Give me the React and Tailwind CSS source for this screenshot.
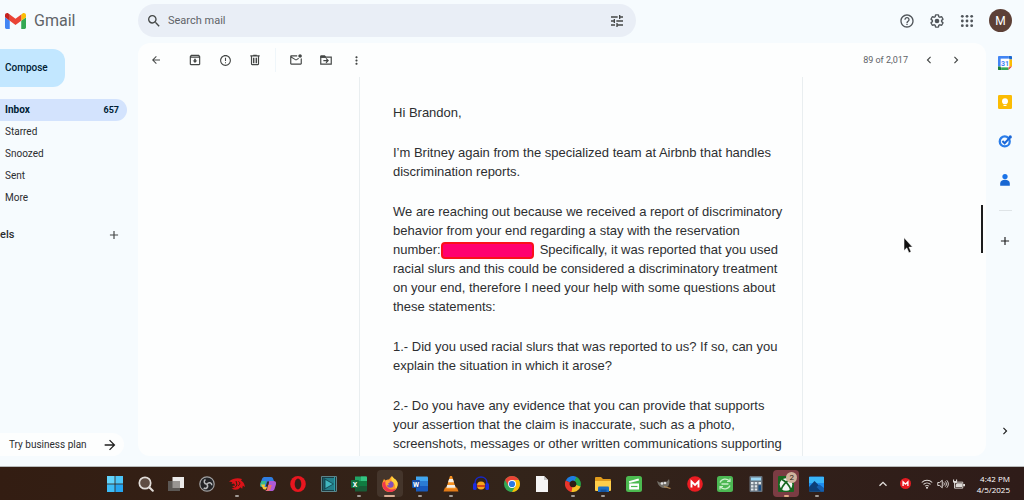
import React from "react";
import {
  MdAdd,
  MdArrowBack,
  MdArrowForward,
  MdChevronLeft,
  MdChevronRight,
  MdErrorOutline,
  MdHelpOutline,
  MdMoreVert,
  MdOutlineArchive,
  MdOutlineMarkEmailUnread,
  MdSearch,
  MdTune,
} from "react-icons/md";

function Svg({ children, className = "size-4", viewBox = "0 0 16 16" }) {
  return (
    <svg viewBox={viewBox} className={className} aria-hidden="true">
      {children}
    </svg>
  );
}

function GmailLogo() {
  return (
    <Svg viewBox="0 0 88 66" className="h-4 w-[21px]">
      <path fill="#4285f4" d="M6 66h14V32L0 17v43c0 3.320 2.690 6 6 6" />
      <path fill="#34a853" d="M68 66h14c3.320 0 6-2.690 6-6V17L68 32" />
      <path fill="#fbbc04" d="M68 6v26l20-15V9c0-7.420-8.470-11.650-14.400-7.200" />
      <path fill="#ea4335" d="M20 32V6l24 18L68 6v26L44 50" />
      <path fill="#c5221f" d="M0 9v8l20 15V6l-5.600-4.200C8.470-2.650 0 1.580 0 9" />
    </Svg>
  );
}

function TrashIcon({ className }) {
  return (
    <Svg viewBox="0 0 24 24" className={className}>
      <path
        fill="currentColor"
        d="M15 4V3H9v1H4v2h1v13c0 1.100.9 2 2 2h10c1.100 0 2-.9 2-2V6h1V4h-5zm2 15H7V6h10v13zM8.500 8H11v9.500H8.500zm4.500 0h2.500v9.500H13z"
      />
    </Svg>
  );
}

function MoveIcon({ className }) {
  return (
    <Svg viewBox="0 0 24 24" className={className}>
      <path fill="none" stroke="currentColor" strokeWidth="2" d="M3 7v12h18V7z" />
      <path fill="currentColor" d="M2 6c0-1.100.9-2 2-2h6l2 2.500V8H2z" />
      <path fill="none" stroke="currentColor" strokeWidth="2" d="M7.500 13h8M12 9.300l3.700 3.700-3.700 3.700" />
    </Svg>
  );
}

function GearIcon({ className }) {
  return (
    <Svg viewBox="0 0 24 24" className={className}>
      <path
        fill="currentColor"
        d="M13.850 22.250h-3.700c-.74 0-1.360-.54-1.450-1.270l-.27-1.890c-.27-.14-.53-.29-.79-.46l-1.800.72c-.7.26-1.470-.03-1.810-.65L2.200 15.530c-.35-.66-.2-1.440.36-1.880l1.530-1.190c-.01-.15-.02-.3-.02-.46 0-.15.01-.31.02-.46l-1.520-1.190c-.59-.45-.74-1.260-.37-1.880l1.850-3.190c.34-.62 1.110-.9 1.790-.63l1.810.73c.26-.17.52-.32.78-.46l.27-1.910c.09-.7.71-1.250 1.440-1.250h3.700c.74 0 1.360.54 1.450 1.270l.27 1.890c.27.14.53.29.79.46l1.800-.72c.71-.26 1.480.03 1.820.65l1.840 3.180c.36.66.2 1.440-.36 1.880l-1.520 1.190c.01.15.02.3.02.46s-.01.31-.02.46l1.520 1.190c.56.45.72 1.230.37 1.860l-1.860 3.220c-.34.62-1.110.9-1.800.63l-1.800-.72c-.26.17-.52.32-.78.46l-.27 1.910c-.1.68-.72 1.220-1.460 1.220zm-3.230-2h2.760l.37-2.550.53-.22c.44-.18.88-.44 1.340-.78l.45-.34 2.380.96 1.380-2.400-2.030-1.580.07-.56c.03-.26.06-.51.06-.78s-.03-.53-.06-.78l-.07-.56 2.030-1.580-1.390-2.400-2.390.96-.45-.35c-.42-.32-.87-.58-1.330-.77l-.52-.22-.37-2.550h-2.760l-.37 2.550-.53.21c-.44.19-.88.44-1.340.79l-.45.33-2.380-.95-1.390 2.390 2.030 1.580-.07.56a7 7 0 0 0-.06.79c0 .26.02.53.06.78l.07.56-2.030 1.580 1.380 2.400 2.390-.96.45.35c.43.33.86.58 1.330.77l.53.22.38 2.550z"
      />
      <circle cx="12" cy="12" r="3.500" fill="currentColor" />
    </Svg>
  );
}

function AppsIcon({ className }) {
  return (
    <Svg viewBox="0 0 24 24" className={className}>
      {[5, 12, 19].map((y) =>
        [5, 12, 19].map((x) => <circle key={`${x}-${y}`} cx={x} cy={y} r="2.100" fill="currentColor" />)
      )}
    </Svg>
  );
}

const sidePanel = [
  {
    label: "Calendar",
    icon: (
      <Svg className="size-[14px]">
        <path fill="#4285f4" d="M1 0h11v4H4v8H0V1a1 1 0 0 1 1-1z" />
        <path fill="#1967d2" d="M12 0h3a1 1 0 0 1 1 1v3h-4z" />
        <path fill="#fbbc04" d="M12 4h4v8h-4z" />
        <path fill="#34a853" d="M4 12h8v4H4z" />
        <path fill="#188038" d="M0 12h4v4H1a1 1 0 0 1-1-1z" />
        <path fill="#ea4335" d="M12 12h4l-4 4z" />
        <path fill="#fff" d="M3 3h10v10H3z" />
        <text x="8" y="11" textAnchor="middle" fontSize="8" fontWeight="700" fill="#4285f4">31</text>
      </Svg>
    ),
  },
  {
    label: "Keep",
    icon: (
      <Svg className="size-[14px]">
        <rect width="16" height="16" rx="1.500" fill="#fbbc04" />
        <circle cx="8" cy="7" r="3.400" fill="#fff" />
        <path fill="#fff" d="M6.300 9h3.400v1.700H6.300zM6.300 11.500h3.400v1.200H6.300z" />
      </Svg>
    ),
  },
  {
    label: "Tasks",
    icon: (
      <Svg className="size-[14px]">
        <circle cx="7.700" cy="8.500" r="5.700" fill="none" stroke="#2a7de9" strokeWidth="2.600" />
        <path fill="none" stroke="#1a66d6" strokeWidth="2.300" d="M5 8l2.600 2.600L14.600 3" />
        <circle cx="14" cy="3.300" r="1.800" fill="#1a66d6" />
      </Svg>
    ),
  },
  {
    label: "Contacts",
    icon: (
      <Svg className="size-[14px]">
        <circle cx="8" cy="4" r="3" fill="#1a73e8" />
        <path fill="#1967d2" d="M2.500 14.500V12c0-2.700 2.300-4.200 5.500-4.200s5.500 1.500 5.500 4.200v2.500z" />
      </Svg>
    ),
  },
];

const taskbar = [
  {
    label: "Start",
    icon: (
      <Svg>
        <path fill="#62d4fb" d="M0 0h7.600v7.600H0z" />
        <path fill="#4cc6f8" d="M8.400 0H16v7.600H8.400z" />
        <path fill="#3dbcf6" d="M0 8.400h7.600V16H0z" />
        <path fill="#25a5f0" d="M8.400 8.400H16V16H8.400z" />
      </Svg>
    ),
  },
  {
    label: "Search",
    icon: (
      <Svg>
        <circle cx="7" cy="7" r="5.700" fill="#5f4d43" stroke="#e2ddd9" strokeWidth="1.700" />
        <path stroke="#e2ddd9" strokeWidth="2" strokeLinecap="round" d="M11.500 11.500l3.300 3.300" />
      </Svg>
    ),
  },
  {
    label: "Task view",
    icon: (
      <Svg>
        <path fill="#eceae9" d="M4.500 1H16v11H4.500z" />
        <path fill="#5c5855" d="M0 5h12v10H0z" />
        <path fill="#999592" d="M4.500 5H12v7H4.500z" />
      </Svg>
    ),
  },
  {
    label: "OBS Studio",
    icon: (
      <Svg>
        <circle cx="8" cy="8" r="7.200" fill="#232427" stroke="#a2a2a3" strokeWidth="1.200" />
        <g fill="none" stroke="#b9babc" strokeWidth="1.500">
          <path d="M8 8.300C4.500 8 4.700 4.500 6.500 3.500" />
          <path d="M8 8.300c1.700-3 4.900-1.300 4.800.9" />
          <path d="M8 8.300c1.800 3-1 5.200-3.300 3.700" />
        </g>
      </Svg>
    ),
  },
  {
    label: "Redragon",
    running: true,
    icon: (
      <Svg>
        <path
          fill="#dc1218"
          d="M0 5.500C4 2 9 1.500 13 3l-1 1.600c2.500 1.300 3.300 3.500 4 6.400l-2.200-1.300-.6 3-1.900-1.500C9.500 14 6 14.500 2.500 12.500l3-.7L3 10l3.200-.5L5 7.500 2.500 8l.9-1.800z"
        />
        <path fill="none" stroke="#33200f" d="M7 5l1 4-2 2.500M9.500 5.500c2 1 1.500 3-.5 4.500" />
      </Svg>
    ),
  },
  {
    label: "Copilot",
    icon: (
      <Svg>
        <path fill="#2f7de1" d="M5 1h6c1.500 0 2 1 2.400 2.500L14 5H9L7 11H2C0 11 0 9 .6 7L2 3c.5-1.500 1.500-2 3-2z" />
        <path fill="#35b98d" d="M1.500 5h4.700l-2 6H2C0 11 0 9 .6 7z" />
        <path fill="#f3c43c" d="M1 8.500h4.200L4.500 11H7l-1 2.500H4.500C3 13.500 2.600 12 2 10.500z" />
        <path fill="#b05ad6" d="M9 5h5c2 0 2.400 2 1.800 4l-1.300 4c-.5 1.500-1.500 2-3 2H5c1.500 0 2-1 2.400-2.500z" />
        <path fill="#f0706d" d="M7.800 9h4l-1.300 4c-.5 1.500-1.500 2-3 2H5c1.500 0 2-1 2.400-2.500z" />
        <path fill="#3c281b" d="M7.200 5.500h2l-1.500 5h-2z" />
      </Svg>
    ),
  },
  {
    label: "Opera",
    icon: (
      <Svg>
        <ellipse cx="8" cy="8" rx="7.800" ry="8" fill="#e8161f" />
        <ellipse cx="8" cy="8" rx="3.300" ry="5.400" fill="#33201a" />
      </Svg>
    ),
  },
  {
    label: "Filmora",
    icon: (
      <Svg>
        <path fill="#1a3c43" stroke="#5d858a" d="M.5.5h15v15H.5z" />
        <path fill="#24808b" d="M2.500 2h11v12h-11z" />
        <path fill="#164e58" d="M3 2l10 6-10 6z" />
        <path fill="#42b8c0" d="M4.500 4l7 4-7 4z" />
        <path stroke="#2ca0a9" d="M13.500 1v14" />
      </Svg>
    ),
  },
  {
    label: "Excel",
    running: true,
    icon: (
      <Svg>
        <path fill="#21a366" d="M4 .5h11a1 1 0 0 1 1 1V5H4z" />
        <path fill="#107c41" d="M4 5h12v5H4z" />
        <path fill="#185c37" d="M4 10h12v4.500a1 1 0 0 1-1 1H4z" />
        <path fill="#33c481" d="M10 .5h5a1 1 0 0 1 1 1V5h-6z" />
        <rect y="4" width="8" height="8" rx="1" fill="#12713c" />
        <text x="4" y="10.500" textAnchor="middle" fontSize="7" fontWeight="700" fill="#fff">X</text>
      </Svg>
    ),
  },
  {
    label: "Firefox",
    active: true,
    icon: (
      <Svg>
        <path fill="#ff9a2a" d="M2 3l1.500 1.500C5 3.500 6 3.600 7 3.600 8 2 9 1 10 0c.5 2 4 3 5.300 6 1.600 5-2.300 10-7.300 10S-.6 12 .4 7C.8 5 1.500 4 2 3z" />
        <path fill="#ffd43c" d="M10 0c.5 2 4 3 5.300 6 .8 3-.3 6-2.300 8 1-4-.5-7-3-8.500C9 3.500 9 2 10 0z" />
        <path fill="#f0364f" d="M.4 7C0 12 3 16 8 16c3 0 5.500-1.500 6.500-4-3 2-6 2-8.500 0C3.500 10.500 3 8 3.500 5z" />
        <circle cx="8.300" cy="8.500" r="3.300" fill="#8250bb" />
        <path fill="#ffa436" d="M3.500 5C5.500 4 7 4.500 8.500 6L6 7.500l1 1.500C5 10 3.500 8 3.500 5z" />
      </Svg>
    ),
  },
  {
    label: "Word",
    running: true,
    icon: (
      <Svg>
        <path fill="#41a5ee" d="M4 .5h11a1 1 0 0 1 1 1V5H4z" />
        <path fill="#2b7cd3" d="M4 5h12v5H4z" />
        <path fill="#185abd" d="M4 10h12v4.500a1 1 0 0 1-1 1H4z" />
        <rect y="4" width="8" height="8" rx="1" fill="#174ea8" />
        <text x="4" y="10.500" textAnchor="middle" fontSize="7" fontWeight="700" fill="#fff">W</text>
      </Svg>
    ),
  },
  {
    label: "VLC",
    running: true,
    icon: (
      <Svg>
        <path fill="#e37b17" d="M2 11.500h12l1.500 4H.5z" />
        <path fill="#f59021" d="M7 0h2l4 13H3z" />
        <path fill="#f3eee8" d="M6.100 3h3.800l1 3.200H5.100zM4.200 9h7.600l.9 2.800H3.300z" />
      </Svg>
    ),
  },
  {
    label: "Audacity",
    icon: (
      <Svg>
        <path fill="none" stroke="#1828c8" strokeWidth="1.600" d="M2 10V7c0-8 12-8 12 0v3" />
        <rect y="7" width="3.600" height="7" rx="1.500" fill="#1c2ce0" />
        <rect x="12.400" y="7" width="3.600" height="7" rx="1.500" fill="#1c2ce0" />
        <ellipse cx="8" cy="9.500" rx="4" ry="4" fill="#f6a51b" />
        <path fill="none" stroke="#d43b18" strokeWidth="1.800" d="M4 10h8" />
      </Svg>
    ),
  },
  {
    label: "Chrome",
    icon: (
      <Svg>
        <circle cx="8" cy="8" r="8" fill="#34a853" />
        <path fill="#ea4335" d="M1.100 4A8 8 0 0 1 14.900 4L8 4.500 4.500 10z" />
        <path fill="#fbbc04" d="M14.900 4A8 8 0 0 1 8 16l3.500-6L8 4z" />
        <circle cx="8" cy="8" r="4" fill="#fff" />
        <circle cx="8" cy="8" r="3.100" fill="#2878e5" />
      </Svg>
    ),
  },
  {
    label: "Document",
    icon: (
      <Svg>
        <path fill="#f5f5f5" d="M2 0h8l4 4v12H2z" />
        <path fill="#c4c4c4" d="M10 0l4 4h-4z" />
      </Svg>
    ),
  },
  {
    label: "Color wheel",
    running: true,
    icon: (
      <Svg>
        <g fill="none" strokeWidth="4.600">
          <path stroke="#1e7ce0" d="M2.800 5.500A5.700 5.700 0 0 1 11 3.200" />
          <path stroke="#26a648" d="M10.500 2.900A5.700 5.700 0 0 1 13 10.500" />
          <path stroke="#f5c125" d="M13.400 9.700A5.700 5.700 0 0 1 6 13.300" />
          <path stroke="#e8352b" d="M7 13.600A5.700 5.700 0 0 1 2.800 5.500" />
        </g>
        <circle cx="8" cy="8" r="3" fill="#2c1c14" />
      </Svg>
    ),
  },
  {
    label: "File Explorer",
    running: true,
    icon: (
      <Svg>
        <path fill="#e19c1c" d="M0 2a1 1 0 0 1 1-1h5l2 2h7a1 1 0 0 1 1 1v3H0z" />
        <path fill="#ffce4a" d="M0 5h16v9a1 1 0 0 1-1 1H1a1 1 0 0 1-1-1z" />
        <path fill="#1d6fc4" d="M3 11.500a1 1 0 0 1 1-1h9a1 1 0 0 1 1 1V16H3z" />
        <path fill="#1555a1" d="M5.500 13.500h6V16h-6z" />
      </Svg>
    ),
  },
  {
    label: "Video editor",
    icon: (
      <Svg>
        <rect width="16" height="16" rx="2.500" fill="#4cba50" />
        <path fill="#fff" d="M2.800 5.200l9.700-2.600.6 1.800-9.700 2.500zM3.200 7.500h9.800v6H3.200z" />
        <path stroke="#4cba50" strokeWidth="1.200" d="M5 10.500h6.500" />
      </Svg>
    ),
  },
  {
    label: "GIMP",
    icon: (
      <Svg>
        <path fill="#716d66" d="M1 5l3 1.500C6 5 9 6 11 5.500L13 3c1 3 .5 7-2.500 8.500C7 13 3.500 11 2 8z" />
        <circle cx="6" cy="7.500" r="1.300" fill="#ddd" />
        <circle cx="9" cy="7" r="1.300" fill="#ddd" />
        <path stroke="#b68b50" strokeWidth="1.200" d="M8 10.500l6.500 2" />
      </Svg>
    ),
  },
  {
    label: "MEGA",
    icon: (
      <Svg>
        <circle cx="8" cy="8" r="7.800" fill="#ea1c22" />
        <path fill="none" stroke="#fff" strokeWidth="1.900" d="M4.500 11.500V5.500L8 9l3.500-3.500v6" />
      </Svg>
    ),
  },
  {
    label: "Converter",
    icon: (
      <Svg>
        <rect width="16" height="16" rx="2.500" fill="#4cb853" />
        <path fill="none" stroke="#c9efca" strokeWidth="1.200" d="M3 6.500C4.500 2.500 10 2 12.500 5M13 2.500v3h-3M13 9.500c-1.500 4-7 4.500-9.500 1.500M3 13.500v-3h3" />
        <path stroke="#c9efca" strokeWidth="1.500" d="M4.500 8h7" />
      </Svg>
    ),
  },
  {
    label: "Calculator",
    icon: (
      <Svg>
        <rect x="1.500" width="13" height="16" rx="1" fill="#687480" />
        <path fill="#9bd6f3" d="M3 1.500h10v3H3z" />
        <path fill="#dfe5e9" d="M3 6h2.500v2.300H3zM6.700 6h2.500v2.300H6.700zM10.500 6H13v2.300h-2.500zM3 9.200h2.500v2.300H3zM6.700 9.200h2.500v2.300H6.700zM3 12.400h2.500v2.200H3zM6.700 12.400h2.500v2.200H6.700z" />
        <path fill="#174d86" d="M10.500 9.200H13v5.400h-2.500z" />
      </Svg>
    ),
  },
  {
    label: "Xbox",
    alert: true,
    badge: "2",
    icon: (
      <Svg>
        <rect width="16" height="16" rx="1" fill="#17661f" />
        <circle cx="8" cy="8.500" r="6.300" fill="#f4f6f4" />
        <path fill="none" stroke="#17661f" strokeWidth="1.700" d="M4 3.500C8 5.500 11 9 12.800 13.500M12 3.500C8 5.500 5 9 3.200 13.500" />
      </Svg>
    ),
  },
  {
    label: "Photos",
    running: true,
    icon: (
      <Svg>
        <rect y=".5" width="15" height="15" rx="1" fill="#1e8df0" />
        <path fill="#39b5f8" d="M0 1h15v6H0z" />
        <path fill="#0c3e78" d="M0 11l5.500-6L15 14.500a1 1 0 0 1-1 1H1a1 1 0 0 1-1-1z" />
        <path fill="#145eae" d="M7.500 11l3-2.500L15 12v3.500h-3z" />
      </Svg>
    ),
  },
];

function IconButton({ label, className = "", children }) {
  return (
    <button
      type="button"
      aria-label={label}
      className={`flex size-5 shrink-0 items-center justify-center rounded-full ${className}`}
    >
      {children}
    </button>
  );
}

function Header() {
  return (
    <header className="flex h-[43px] shrink-0 items-center pb-[2px] pr-3">
      <a href="#inbox" className="flex w-[138px] shrink-0 items-center gap-2 pl-[5px]">
        <GmailLogo />
        <span className="text-[16px] leading-5 text-[#5f6368]">Gmail</span>
      </a>
      <form className="flex h-[33px] max-w-[498px] flex-1 items-center gap-1 rounded-full bg-[#e9eef6] pl-[6px] pr-[9px] text-[#444746]">
        <IconButton label="Search">
          <MdSearch className="size-4" />
        </IconButton>
        <input
          type="text"
          aria-label="Search mail"
          placeholder="Search mail"
          className="min-w-0 flex-1 bg-transparent text-[11px] leading-4 outline-none placeholder:text-[#5f6368]"
        />
        <IconButton label="Show search options">
          <MdTune className="size-4" />
        </IconButton>
      </form>
      <div className="ml-auto flex items-center gap-3">
        <div className="flex items-center gap-[10px] text-[#50555a]">
          <IconButton label="Support">
            <MdHelpOutline className="size-4" />
          </IconButton>
          <IconButton label="Settings">
            <GearIcon className="size-4" />
          </IconButton>
          <IconButton label="Google apps">
            <AppsIcon className="size-4" />
          </IconButton>
        </div>
        <button
          type="button"
          className="flex size-[23px] items-center justify-center rounded-full bg-[#5d4037] text-[12px] leading-none text-white"
        >
          M
        </button>
      </div>
    </header>
  );
}

function Sidebar() {
  return (
    <aside className="flex w-[138px] shrink-0 flex-col items-start pt-[6px] text-[10px] leading-4 text-[#2b2d30]">
      <button
        type="button"
        className="h-[38px] w-[65px] rounded-r-xl bg-[#c2e7ff] pl-[5px] text-left font-medium text-[#001d35]"
      >
        Compose
      </button>
      <nav className="mt-3 w-[127px]">
        <a
          href="#inbox"
          className="flex h-[22px] items-center justify-between rounded-r-full bg-[#d3e3fd] pl-[5px] pr-2 font-bold text-[#001d35]"
        >
          <span>Inbox</span>
          <span className="text-[9px]">657</span>
        </a>
        {["Starred", "Snoozed", "Sent", "More"].map((item) => (
          <a key={item} href={`#${item.toLowerCase()}`} className="flex h-[22px] items-center pl-[5px]">
            {item}
          </a>
        ))}
      </nav>
      <div className="mt-4 flex w-[124px] items-center justify-between">
        <h2 className="text-[11px] font-medium">els</h2>
        <IconButton label="Create new label">
          <MdAdd className="size-[14px] text-[#444746]" />
        </IconButton>
      </div>
      <button
        type="button"
        className="mt-auto flex h-[23px] w-[124px] items-center justify-between rounded-r-full bg-[#fdfefe] pl-[9px] pr-[6px]"
      >
        Try business plan
        <MdArrowForward className="size-4 text-[#1f1f1f]" />
      </button>
    </aside>
  );
}

function Toolbar() {
  return (
    <div className="flex h-[34px] shrink-0 items-center pl-2 pr-5 text-[#444746]">
      <IconButton label="Back" className="mr-[19px]">
        <MdArrowBack className="size-3" />
      </IconButton>
      <div className="flex gap-[10px]">
        <IconButton label="Archive">
          <MdOutlineArchive className="size-[14px]" />
        </IconButton>
        <IconButton label="Report spam">
          <MdErrorOutline className="size-[13px]" />
        </IconButton>
        <IconButton label="Delete">
          <TrashIcon className="size-[14px]" />
        </IconButton>
      </div>
      <div className="mx-[10px] h-6 w-px bg-[#eff6fa]" />
      <div className="flex gap-[10px]">
        <IconButton label="Mark as unread">
          <MdOutlineMarkEmailUnread className="size-[14px]" />
        </IconButton>
        <IconButton label="Move to">
          <MoveIcon className="size-[14px]" />
        </IconButton>
        <IconButton label="More">
          <MdMoreVert className="size-[13px]" />
        </IconButton>
      </div>
      <span className="ml-auto mr-[11px] text-[9px] leading-4 text-[#5f6368]">89 of 2,017</span>
      <IconButton label="Newer" className="mr-[7px]">
        <MdChevronLeft className="size-[14px]" />
      </IconButton>
      <IconButton label="Older">
        <MdChevronRight className="size-[14px]" />
      </IconButton>
    </div>
  );
}

function Message() {
  return (
    <div className="min-h-0 flex-1 overflow-hidden pl-[38px]">
      <article className="mx-auto min-h-full max-w-[444px] space-y-[21px] border-x border-[#e9eef0] pl-[33px] pr-3 pt-[26px] font-['Liberation_Sans',Arial,sans-serif] text-[13px] leading-[19px] text-[#2d2f31]">
        <p>Hi Brandon,</p>
        <p>
          I’m Britney again from the specialized team at Airbnb that handles
          <br />
          discrimination reports.
        </p>
        <p>
          We are reaching out because we received a report of discriminatory
          <br />
          behavior from your end regarding a stay with the reservation
          <br />
          number:
          <span className="mr-[6px] inline-block h-[17px] w-[93px] rounded-sm border-2 border-[#fb0f1b] bg-[#ff0070] align-middle" />
          Specifically, it was reported that you used
          <br />
          racial slurs and this could be considered a discriminatory treatment
          <br />
          on your end, therefore I need your help with some questions about
          <br />
          these statements:
        </p>
        <p>
          1.- Did you used racial slurs that was reported to us? If so, can you
          <br />
          explain the situation in which it arose?
        </p>
        <p>
          2.- Do you have any evidence that you can provide that supports
          <br />
          your assertion that the claim is inaccurate, such as a photo,
          <br />
          screenshots, messages or other written communications supporting
        </p>
      </article>
    </div>
  );
}

function SidePanel() {
  return (
    <aside className="flex w-[38px] shrink-0 flex-col items-center pb-[15px] pt-[10px]">
      <div className="flex flex-col gap-[19px]">
        {sidePanel.map((app) => (
          <IconButton key={app.label} label={app.label}>
            {app.icon}
          </IconButton>
        ))}
      </div>
      <div className="my-5 h-px w-[13px] bg-[#dfe4e7]" />
      <IconButton label="Get add-ons">
        <MdAdd className="size-[14px] text-[#1f1f1f]" />
      </IconButton>
      <IconButton label="Hide side panel" className="mt-auto">
        <MdChevronRight className="size-[14px] text-[#1f1f1f]" />
      </IconButton>
    </aside>
  );
}

function TaskbarButton({ app }) {
  return (
    <button
      type="button"
      aria-label={app.label}
      className={`relative flex h-[27px] w-[26px] items-center justify-center rounded ${
        app.alert ? "bg-[#7b3c43]" : app.active ? "bg-[#44352b]" : ""
      }`}
    >
      {app.icon}
      {app.badge && (
        <span className="absolute right-[2px] top-[2px] flex size-[11px] items-center justify-center rounded-full bg-[#cfb39d] text-[8px] leading-none text-[#2b1a12]">
          {app.badge}
        </span>
      )}
      {app.running && <span className="absolute bottom-0 h-[2px] w-1 rounded-full bg-[#a39c97]" />}
      {app.alert && <span className="absolute bottom-0 h-[2px] w-[5px] rounded-full bg-[#e3a984]" />}
      {app.active && <span className="absolute bottom-0 h-[2px] w-[11px] rounded-full bg-[#d9ac94]" />}
    </button>
  );
}

function Taskbar() {
  return (
    <footer className="flex h-[34px] shrink-0 items-center border-t border-[#b9bcbc] bg-linear-to-r from-[#331d12] via-[#33241a] to-[#2f1c19] pl-[102px] pr-[14px] text-white">
      <div className="flex max-w-[728px] flex-1 justify-between">
        {taskbar.map((app) => (
          <TaskbarButton key={app.label} app={app} />
        ))}
      </div>
      <div className="ml-auto flex items-center gap-1">
        <button type="button" aria-label="Show hidden icons" className="mr-2">
          <Svg className="size-[10px]" viewBox="0 0 10 10">
            <path fill="none" stroke="#e5e1de" strokeWidth="1.300" d="M1.500 6.800L5 3.300l3.500 3.500" />
          </Svg>
        </button>
        <Svg className="mr-[6px] size-[11px]">
          <circle cx="8" cy="8" r="8" fill="#e51b22" />
          <path fill="none" stroke="#fff" strokeWidth="1.900" d="M4.500 11.500V5.500L8 9l3.500-3.500v6" />
        </Svg>
        <Svg className="size-3">
          <g fill="none" stroke="#dedad7" strokeWidth="1.400">
            <path d="M1 6c4-4 10-4 14 0" />
            <path d="M3.300 8.600c2.700-2.700 6.700-2.700 9.400 0" />
            <path d="M5.500 11c1.500-1.500 3.500-1.500 5 0" />
          </g>
          <circle cx="8" cy="13" r="1.400" fill="#dedad7" />
        </Svg>
        <Svg className="size-3">
          <g fill="none" stroke="#dedad7" strokeWidth="1.300">
            <path d="M1 6h2.500L7 3v10l-3.500-3H1z" />
            <path d="M9 6c1 1.300 1 2.700 0 4M11 4.500c2 2.300 2 4.700 0 7M13 3c2.800 3.300 2.800 6.700 0 10" />
          </g>
        </Svg>
        <Svg className="size-3">
          <path fill="none" stroke="#dedad7" strokeWidth="1.200" d="M2 5.500h11v8H2z" />
          <path fill="#dedad7" d="M5 7h7v5H3.500V9zM13.500 8H16v3h-2.500zM0 2h1.500v2H4V2h1.500v3.500L4 7H2L0 5.500z" />
        </Svg>
        <time className="ml-2 text-right font-['Open_Sans',sans-serif] text-[8px] leading-[11px]">
          4:42 PM
          <br />
          4/5/2025
        </time>
      </div>
    </footer>
  );
}

export default function App() {
  return (
    <div className="relative flex h-screen flex-col overflow-hidden bg-[#f6fbfe] font-[Roboto,sans-serif]">
      <Header />
      <div className="mb-[10px] flex min-h-0 flex-1">
        <Sidebar />
        <main className="relative flex min-w-0 flex-1 flex-col overflow-hidden rounded-xl bg-[#fdfefe]">
          <Toolbar />
          <Message />
          <div className="absolute right-[3px] top-[162px] h-12 w-[2px] bg-[#1d1d1d]" />
        </main>
        <SidePanel />
      </div>
      <Taskbar />
      <Svg viewBox="0 0 10 18" className="absolute left-[903px] top-[237px] h-[17px] w-[10px]">
        <path fill="#111" stroke="#fff" strokeWidth=".5" d="M.8.8v13.500l3-2.800 2.200 5.200 2.200-1-2.200-5h3.700z" />
      </Svg>
    </div>
  );
}
